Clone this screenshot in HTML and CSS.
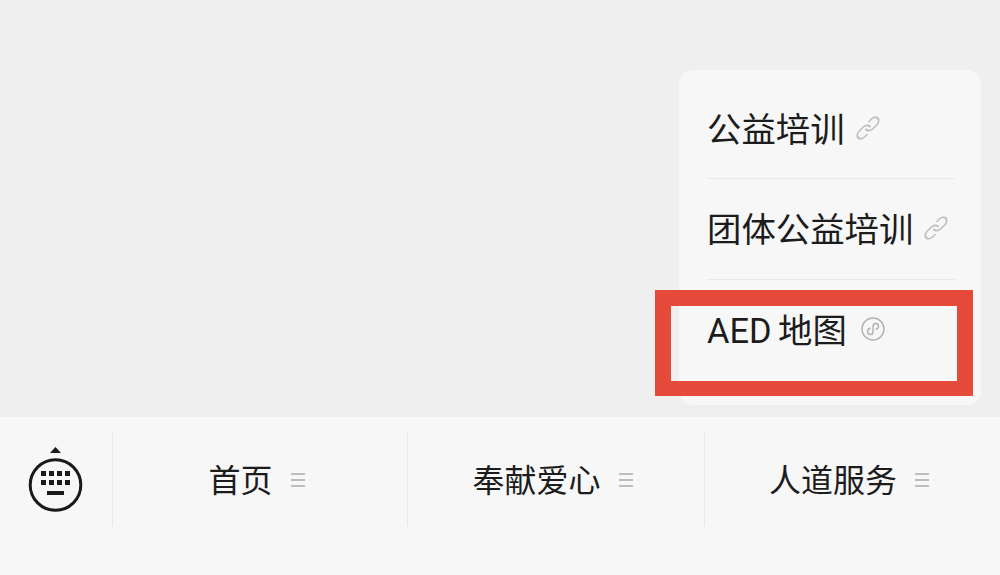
FILE: index.html
```html
<!DOCTYPE html>
<html lang="zh-CN">
<head>
<meta charset="utf-8">
<title>AED 地图</title>
<link rel="stylesheet" href="styles.css">
</head>
<body>
<svg class="defs" width="0" height="0" aria-hidden="true">
  <symbol id="link" viewBox="0 0 24 24">
    <g fill="none" stroke="currentColor" stroke-width="1.800" stroke-linecap="round" stroke-linejoin="round" transform="translate(12 12) rotate(-45) scale(1.150 .8) rotate(45) translate(-12 -12)">
      <path d="M10 13a5 5 0 0 0 7.540.540l3-3a5 5 0 0 0-7.070-7.070l-1.720 1.710"/>
      <path d="M14 11a5 5 0 0 0-7.540-.540l-3 3a5 5 0 0 0 7.070 7.070l1.710-1.710"/>
    </g>
  </symbol>
</svg>
<main class="stage">
  <nav class="menu">
    <a class="menu-item"><span class="label">公益培训</span><svg class="link-icon"><use href="#link"/></svg></a>
    <a class="menu-item"><span class="label">团体公益培训</span><svg class="link-icon"><use href="#link"/></svg></a>
    <a class="menu-item menu-item-last"><span class="label">AED 地图</span>
      <svg class="mini-icon" viewBox="0 0 24 24"><circle cx="12" cy="12" r="11" fill="none" stroke="currentColor" stroke-width="1.400"/><path d="M6.500 14.500c0 2 1.400 3 2.800 3 1.700 0 2.700-1.200 2.700-2.800V9.300c0-1.600 1-2.800 2.700-2.800 1.400 0 2.800 1 2.800 3 0 1.500-1 2.500-2.300 2.800M9 11.200c-1.500.4-2.500 1.700-2.500 3.300" fill="none" stroke="currentColor" stroke-width="1.400" stroke-linecap="round"/></svg>
    </a>
  </nav>
  <div class="highlight"></div>
</main>
<footer class="tabbar">
  <div class="keyboard">
    <svg class="keyboard-icon" viewBox="0 0 56 66">
      <path d="M27.500 1 33 7H22z" fill="#1a1a1a"/>
      <circle cx="27.500" cy="39" r="25.300" fill="none" stroke="#1a1a1a" stroke-width="3"/>
      <g fill="#1a1a1a">
        <rect x="13" y="25" width="5" height="5"/><rect x="21" y="25" width="5" height="5"/><rect x="29" y="25" width="5" height="5"/><rect x="37" y="25" width="5" height="5"/>
        <rect x="13" y="34" width="5" height="5"/><rect x="21" y="34" width="5" height="5"/><rect x="29" y="34" width="5" height="5"/><rect x="37" y="34" width="5" height="5"/>
        <rect x="19" y="45" width="17" height="4"/>
      </g>
    </svg>
  </div>
  <a class="tab"><span class="label">首页</span><i class="lines"></i></a>
  <a class="tab"><span class="label">奉献爱心</span><i class="lines"></i></a>
  <a class="tab"><span class="label">人道服务</span><i class="lines"></i></a>
</footer>
</body>
</html>
```
FILE: styles.css
```css
* { box-sizing: border-box; }
html, body { margin: 0; height: 100%; }
body {
  width: 1000px;
  height: 575px;
  overflow: hidden;
  display: flex;
  flex-direction: column;
  background: #efefef;
  color: #1c1c1c;
  font-family: Roboto, "Noto Sans CJK SC", sans-serif;
}
.defs { position: absolute; }
.stage {
  position: relative;
  height: 417px;
  padding: 70px 19px 12px 0;
  display: flex;
  justify-content: flex-end;
}
.menu {
  width: 302px;
  height: 335px;
  padding: 0 26px 0 28px;
  background: #f7f7f7;
  border-radius: 14px;
  display: flex;
  flex-direction: column;
}
.label { padding-top: 2px; }
.menu-item {
  height: 101px;
  display: flex;
  align-items: center;
  gap: 11px;
  font-size: 34.400px;
  line-height: 1;
  border-bottom: 1px solid #e9e9e9;
}
.menu-item:first-child { height: 109px; padding-top: 10px; }
.menu-item-last { border-bottom: 0; height: 102px; padding-bottom: 2px; gap: 14px; word-spacing: -2px; }
.link-icon { width: 24px; height: 24px; color: #bcbcbc; flex: none; margin-top: -3px; }
.mini-icon { width: 24px; height: 24px; color: #b0b0b0; flex: none; margin-top: -2px; }
.highlight {
  position: absolute;
  left: 655px;
  top: 290px;
  width: 318px;
  height: 106px;
  border: 16px solid #e64a3b;
  border-bottom-width: 15px;
}
.tabbar {
  flex: 1;
  display: grid;
  grid-template-columns: 112px 295px 297px 296px;
  padding: 16px 0 49px;
  background: #f7f7f7;
}
.keyboard { display: flex; align-items: flex-start; justify-content: center; padding-top: 13px; }
.keyboard-icon { width: 56px; height: 66px; }
.tab {
  display: flex;
  align-items: center;
  justify-content: center;
  gap: 18px;
  border-left: 1px solid #e9e9e9;
  font-size: 32px;
  line-height: 1;
  padding: 0 7px 0 0;
}
.lines {
  width: 14px;
  height: 14px;
  border-top: 2px solid #bdbdbd;
  border-bottom: 2px solid #bdbdbd;
  background: linear-gradient(#bdbdbd, #bdbdbd) center / 100% 2px no-repeat;
}
```
